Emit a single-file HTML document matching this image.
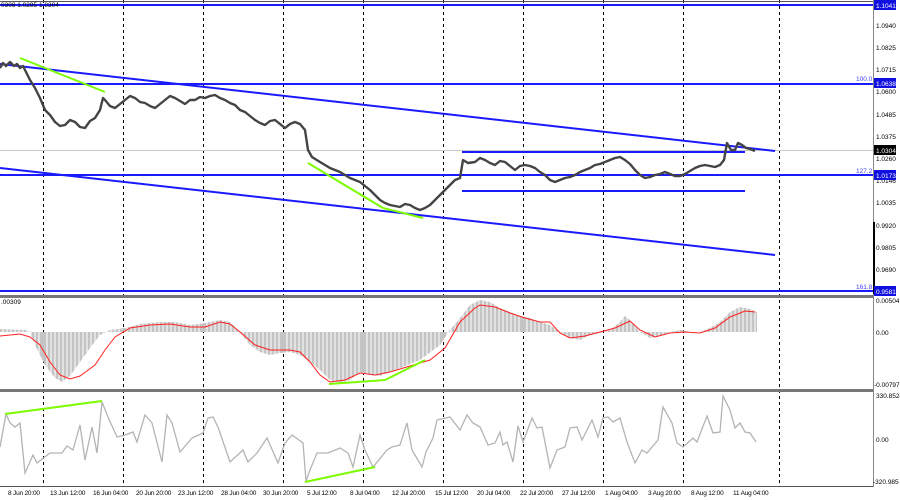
<!DOCTYPE html>
<html><head><meta charset="utf-8"><style>
html,body{margin:0;padding:0;background:#fff;width:900px;height:500px;overflow:hidden}
svg{display:block}
text{font-family:"Liberation Sans",sans-serif;font-size:6.5px;fill:#000}
</style></head><body>
<svg width="900" height="500" viewBox="0 0 900 500" xmlns="http://www.w3.org/2000/svg">
<rect width="900" height="500" fill="#fff"/>
<g stroke="#000" stroke-width="1" stroke-dasharray="3,3">
<line x1="43.5" y1="0" x2="43.5" y2="486"/><line x1="123.5" y1="0" x2="123.5" y2="486"/>
<line x1="203.5" y1="0" x2="203.5" y2="486"/><line x1="283.5" y1="0" x2="283.5" y2="486"/>
<line x1="363.5" y1="0" x2="363.5" y2="486"/><line x1="443.5" y1="0" x2="443.5" y2="486"/>
<line x1="523.5" y1="0" x2="523.5" y2="486"/><line x1="603.5" y1="0" x2="603.5" y2="486"/>
<line x1="683.5" y1="0" x2="683.5" y2="486"/><line x1="779.5" y1="0" x2="779.5" y2="486"/>
</g>
<line x1="0" y1="1.5" x2="873" y2="1.5" stroke="#555" stroke-width="1"/>
<rect x="0" y="295" width="873" height="3" fill="#777"/>
<rect x="0" y="389" width="873" height="3" fill="#777"/>
<line x1="0" y1="486.5" x2="873" y2="486.5" stroke="#555"/>
<line x1="873.5" y1="0" x2="873.5" y2="487" stroke="#888"/>
<rect x="873" y="222" width="2" height="72" fill="#000"/>
<line x1="0" y1="150.5" x2="873" y2="150.5" stroke="#c8c8c8"/>
<g stroke="#1a1aff" stroke-width="2">
<line x1="0" y1="5" x2="873" y2="5"/>
<line x1="0" y1="84" x2="873" y2="84"/>
<line x1="0" y1="175" x2="873" y2="175"/>
<line x1="0" y1="291" x2="873" y2="291"/>
<line x1="0" y1="64" x2="775" y2="151"/>
<line x1="0" y1="168" x2="775" y2="255"/>
<line x1="462" y1="152" x2="745" y2="152"/>
<line x1="462" y1="191" x2="745" y2="191"/>
</g>
<polyline fill="none" stroke="#444" stroke-width="2.4" stroke-linejoin="round" points="0,68 3,63 6,66 10,62 14,66 17,64 20,68 23,66 25,70 30,80 35,88 40,98 45,110 50,115 55,122 60,126 65,125 70,120 75,122 80,127 85,128 90,121 95,118 100,110 103,98 105,100 110,106 115,108 120,104 125,100 130,96 135,98 140,102 145,103 150,106 155,108 160,104 165,100 170,96 175,98 180,101 185,104 190,100 195,100 200,97 205,98 210,96 215,95 220,98 225,100 230,103 235,105 240,110 245,112 250,116 255,120 260,123 265,125 270,121 275,120 280,124 285,128 290,124 295,122 300,124 305,130 308,150 312,157 320,162 325,165 330,168 335,170 340,172 345,175 350,178 355,180 360,182 365,186 370,190 375,195 380,200 385,203 390,205 395,206 400,207 405,204 410,205 415,208 420,210 425,208 430,205 435,200 440,195 445,190 450,185 455,180 460,178 463,160 468,163 475,162 480,158 485,160 490,163 495,165 500,161 505,162 510,166 515,170 520,166 525,165 530,166 535,168 540,172 545,175 550,180 555,182 560,180 565,178 570,177 575,175 580,172 585,170 590,168 595,165 600,164 605,162 610,160 615,158 620,157 625,160 630,164 635,170 640,175 645,178 650,177 655,175 660,174 665,172 670,174 675,176 680,176 685,174 690,171 695,168 700,166 705,165 710,166 715,167 720,165 724,160 727,143 731,150 735,150 738,143 742,145 746,148 750,149 755,151"/>
<polygon fill="#c4c4c4" points="0,332 0,329 25,330 30,332 35,345 45,365 55,378 62,382 70,376 80,362 90,348 100,335 110,330 125,328 140,324 160,322 175,322 190,325 205,323 220,320 230,322 240,332 250,345 260,352 270,355 280,353 290,352 300,355 310,362 320,370 330,380 340,383 350,380 360,372 370,375 380,376 390,372 400,368 420,360 440,345 450,330 460,318 470,305 480,300 490,302 500,308 510,312 520,316 530,318 540,322 550,325 560,332 570,338 580,340 590,335 600,333 610,330 620,322 625,316 630,320 640,332 650,338 660,336 670,332 680,330 690,332 700,332 710,328 720,322 730,312 740,307 750,309 757,312 757,332"/>
<g stroke="#fff" stroke-width="1">
<path d="M3,300V386M7,300V386M11,300V386M15,300V386M19,300V386M23,300V386M27,300V386M31,300V386M35,300V386M39,300V386M47,300V386M51,300V386M55,300V386M59,300V386M63,300V386M67,300V386M71,300V386M75,300V386M79,300V386M83,300V386M87,300V386M91,300V386M95,300V386M99,300V386M103,300V386M107,300V386M111,300V386M115,300V386M119,300V386M127,300V386M131,300V386M135,300V386M139,300V386M143,300V386M147,300V386M151,300V386M155,300V386M159,300V386M163,300V386M167,300V386M171,300V386M175,300V386M179,300V386M183,300V386M187,300V386M191,300V386M195,300V386M199,300V386M207,300V386M211,300V386M215,300V386M219,300V386M223,300V386M227,300V386M231,300V386M235,300V386M239,300V386M243,300V386M247,300V386M251,300V386M255,300V386M259,300V386M263,300V386M267,300V386M271,300V386M275,300V386M279,300V386M287,300V386M291,300V386M295,300V386M299,300V386M303,300V386M307,300V386M311,300V386M315,300V386M319,300V386M323,300V386M327,300V386M331,300V386M335,300V386M339,300V386M343,300V386M347,300V386M351,300V386M355,300V386M359,300V386M367,300V386M371,300V386M375,300V386M379,300V386M383,300V386M387,300V386M391,300V386M395,300V386M399,300V386M403,300V386M407,300V386M411,300V386M415,300V386M419,300V386M423,300V386M427,300V386M431,300V386M435,300V386M439,300V386M447,300V386M451,300V386M455,300V386M459,300V386M463,300V386M467,300V386M471,300V386M475,300V386M479,300V386M483,300V386M487,300V386M491,300V386M495,300V386M499,300V386M503,300V386M507,300V386M511,300V386M515,300V386M519,300V386M527,300V386M531,300V386M535,300V386M539,300V386M543,300V386M547,300V386M551,300V386M555,300V386M559,300V386M563,300V386M567,300V386M571,300V386M575,300V386M579,300V386M583,300V386M587,300V386M591,300V386M595,300V386M599,300V386M607,300V386M611,300V386M615,300V386M619,300V386M623,300V386M627,300V386M631,300V386M635,300V386M639,300V386M643,300V386M647,300V386M651,300V386M655,300V386M659,300V386M663,300V386M667,300V386M671,300V386M675,300V386M679,300V386M687,300V386M691,300V386M695,300V386M699,300V386M703,300V386M707,300V386M711,300V386M715,300V386M719,300V386M723,300V386M727,300V386M731,300V386M735,300V386M739,300V386M743,300V386M747,300V386M751,300V386M755,300V386"/>
</g>
<polyline fill="none" stroke="#ff2020" stroke-width="1" points="0,336 20,334 30,337 40,345 50,362 60,375 70,379 80,376 95,365 105,350 115,337 130,328 150,325 170,324 190,327 205,327 220,322 230,324 240,332 255,345 270,350 290,350 300,352 310,362 320,375 330,382 345,380 360,373 375,375 390,372 410,366 430,360 445,348 460,322 475,308 480,305 495,307 510,313 525,318 540,322 550,322 560,333 570,338 585,336 600,332 615,328 630,321 640,330 655,337 670,333 685,332 700,333 715,328 730,317 745,311 755,312"/>
<polyline fill="none" stroke="#b4b4b4" stroke-width="1.3" points="0,447 6,414 10,423 15,427 20,423 25,473 33,455 37,463 50,453 62,453 67,446 73,450 80,425 85,460 92,427 97,453 102,402 108,417 117,437 125,435 133,432 137,442 145,415 152,423 162,462 167,415 172,423 180,452 192,438 203,433 208,418 213,417 218,427 230,462 243,450 248,462 257,453 267,438 278,463 285,443 292,435 303,443 306,481 310,470 317,453 328,453 340,448 348,453 353,467 360,435 365,450 373,467 387,450 392,447 400,445 407,423 412,450 422,467 426,452 433,438 437,420 450,417 460,430 467,415 473,423 480,427 488,445 495,443 500,432 503,445 507,442 513,462 518,426 523,442 532,418 537,428 542,427 550,468 557,450 565,447 570,428 577,427 582,440 587,430 592,420 598,437 603,418 608,417 613,422 620,418 627,442 635,463 642,450 647,453 658,440 663,407 672,423 677,443 683,447 693,438 697,442 707,416 713,433 720,432 723,396 730,410 735,428 740,423 745,432 750,433 756,442"/>
<g stroke="#7cfc00" stroke-width="2" fill="none">
<polyline points="20,58 105,92"/>
<polyline points="308,163 383,208 423,218"/>
<polyline points="329,384 385,380 425,360"/>
<polyline points="5,414 102,401"/>
<polyline points="305,482 375,467"/>
</g>
<text x="1" y="7">0308 1.0295 1.0304</text>
<text x="1" y="304">.00309</text>
<text x="856" y="81" style="fill:#4040ff">100.0</text><text x="856" y="173" style="fill:#4040ff">127.2</text><text x="856" y="289" style="fill:#4040ff">161.8</text>
<g>
<text x="876" y="28">1.0940</text><text x="876" y="50">1.0825</text><text x="876" y="72">1.0715</text>
<text x="876" y="94">1.0600</text><text x="876" y="117">1.0485</text><text x="876" y="139">1.0375</text>
<text x="876" y="161">1.0260</text><text x="876" y="183">1.0146</text><text x="876" y="205">1.0035</text>
<text x="876" y="228">0.9920</text><text x="876" y="250">0.9805</text><text x="876" y="272">0.9690</text>
<text x="876" y="303">0.00504</text><text x="876" y="335">0.00</text><text x="874" y="387">-0.00797</text>
<text x="876" y="398">330.8524</text><text x="876" y="442">0.00</text><text x="873" y="484">-320.985</text>
</g>
<rect x="874" y="0" width="22" height="10" fill="#1010e0"/><text x="876" y="8" style="fill:#fff">1.1041</text>
<rect x="874" y="78" width="22" height="10" fill="#1010e0"/><text x="876" y="86" style="fill:#fff">1.0638</text>
<rect x="874" y="145" width="22" height="10" fill="#000"/><text x="876" y="153" style="fill:#fff">1.0304</text>
<rect x="874" y="170" width="22" height="10" fill="#1010e0"/><text x="876" y="178" style="fill:#fff">1.0173</text>
<rect x="874" y="286" width="22" height="10" fill="#1010e0"/><text x="876" y="294" style="fill:#fff">0.9581</text>
<g style="letter-spacing:-0.2px">
<text x="8" y="495">8 Jun 20:00</text><text x="50" y="495">13 Jun 12:00</text><text x="93" y="495">16 Jun 04:00</text>
<text x="136" y="495">20 Jun 20:00</text><text x="178" y="495">23 Jun 12:00</text><text x="221" y="495">28 Jun 04:00</text>
<text x="263" y="495">30 Jun 20:00</text><text x="307" y="495">5 Jul 12:00</text><text x="350" y="495">8 Jul 04:00</text>
<text x="392" y="495">12 Jul 20:00</text><text x="435" y="495">15 Jul 12:00</text><text x="477" y="495">20 Jul 04:00</text>
<text x="520" y="495">22 Jul 20:00</text><text x="562" y="495">27 Jul 12:00</text><text x="605" y="495">1 Aug 04:00</text>
<text x="648" y="495">3 Aug 20:00</text><text x="691" y="495">8 Aug 12:00</text><text x="733" y="495">11 Aug 04:00</text>
</g>
</svg>
</body></html>
